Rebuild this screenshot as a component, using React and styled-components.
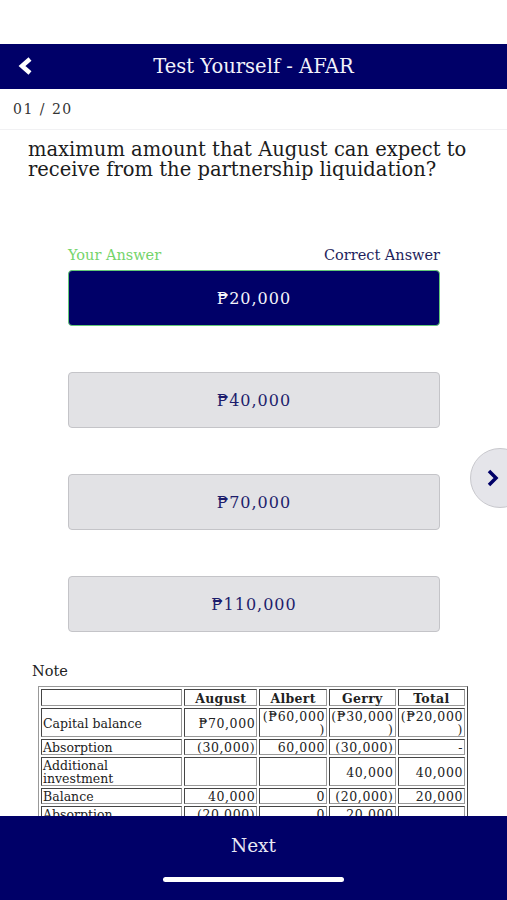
import styled, { createGlobalStyle } from "styled-components";

const NAVY = "#000068";
const FONT = `"DejaVu Serif", "Liberation Serif", Georgia, serif`;

const GlobalStyle = createGlobalStyle`
  html, body {
    margin: 0;
    padding: 0;
    background: #fff;
    font-family: ${FONT};
  }
  * { box-sizing: border-box; }
`;

const Screen = styled.div`
  height: 100vh;
  display: flex;
  flex-direction: column;
  overflow: hidden;
  background: #fff;
`;

const StatusSpace = styled.div`
  height: 44px;
  flex-shrink: 0;
`;

const Header = styled.header`
  height: 45px;
  flex-shrink: 0;
  background: ${NAVY};
  display: flex;
  align-items: center;
  position: relative;
  justify-content: center;
  color: #f2f2fa;
  font-size: 19.5px;
`;

const BackButton = styled.button`
  position: absolute;
  left: 14px;
  top: 10px;
  background: none;
  border: none;
  padding: 0;
  width: 24px;
  height: 24px;
  display: flex;
  align-items: center;
  justify-content: center;
`;

const Counter = styled.div`
  height: 41px;
  flex-shrink: 0;
  display: flex;
  align-items: center;
  padding-left: 13px;
  font-size: 14px;
  color: #333;
  letter-spacing: 1.5px;
  border-bottom: 1px solid #f1f1f3;
`;

const Body = styled.main`
  flex: 1;
  overflow: hidden;
  position: relative;
`;

const Question = styled.p`
  margin: 10px 0 0 28px;
  width: 460px;
  font-size: 19.5px;
  line-height: 20px;
  color: #1b1b1b;
`;

const Options = styled.section`
  margin: 66px 0 0 68px;
  width: 372px;
  display: flex;
  flex-direction: column;
  gap: 46px;
`;

const Labels = styled.div`
  display: flex;
  justify-content: space-between;
  font-size: 14.5px;
  margin-top: 1px;
  margin-bottom: -39px;
`;

const Label = styled.span`
  color: ${(p) => p.$color};
`;

const Option = styled.button`
  height: 56px;
  width: 100%;
  border-radius: 4px;
  font-family: ${FONT};
  font-size: 16px;
  letter-spacing: 1px;
  background: ${(p) => (p.$selected ? NAVY : "#e2e2e5")};
  color: ${(p) => (p.$selected ? "#f4f4fb" : "#1d1d6c")};
  border: 1px solid ${(p) => (p.$selected ? "#63c877" : "#c4c4c8")};
`;

const SideButton = styled.button`
  position: absolute;
  left: 470px;
  top: 318px;
  width: 60px;
  height: 60px;
  border-radius: 50%;
  background: #e5e5ea;
  border: 1px solid #c8c8cd;
  padding: 0 0 0 15px;
  display: flex;
  align-items: center;
`;

const NoteTitle = styled.div`
  margin: 31px 0 0 32px;
  font-size: 14.5px;
  color: #222;
`;

const Table = styled.table`
  margin: 7px 0 0 38px;
  width: 430px;
  border: 1px outset #999;
  border-spacing: 2px;
  font-size: 12.5px;
  color: #222;
  table-layout: fixed;
  line-height: 13px;
`;

const Col = styled.col`
  width: ${(p) => p.$w};
`;

const Cell = styled.td`
  border: 1px inset #999;
  padding: 1px 1px 0;
  text-align: ${(p) => (p.$left ? "left" : "right")};
  letter-spacing: ${(p) => (p.$left ? "0" : "0.6px")};
  vertical-align: middle;
  overflow-wrap: anywhere;
`;

const HeadCell = styled.th`
  border: 1px inset #999;
  padding: 2px 1px 0;
  font-weight: bold;
  text-align: center;
  letter-spacing: 0.3px;
`;

const Footer = styled.footer`
  height: 84px;
  flex-shrink: 0;
  background: ${NAVY};
  display: flex;
  flex-direction: column;
  align-items: center;
  color: #e8e8f4;
  font-size: 18.5px;
  padding-top: 19px;
`;

const HomeBar = styled.div`
  width: 181px;
  height: 5px;
  border-radius: 3px;
  background: #fff;
  margin-top: 21px;
`;

const rows = [
  ["Capital balance", "₱70,000", "(₱60,000)", "(₱30,000)", "(₱20,000)"],
  ["Absorption", "(30,000)", "60,000", "(30,000)", "-"],
  ["Additional investment", "", "", "40,000", "40,000"],
  ["Balance", "40,000", "0", "(20,000)", "20,000"],
  ["Absorption", "(20,000)", "0", "20,000", ""],
];

const answers = ["₱20,000", "₱40,000", "₱70,000", "₱110,000"];

const App = () => {
  return (
    <Screen>
      <GlobalStyle />
      <StatusSpace />
      <Header>
        <BackButton aria-label="Back">
          <svg width="18" height="20" viewBox="0 0 18 20">
            <path d="M13 3 L5 10 L13 17" fill="none" stroke="#fff" strokeWidth="4.5" strokeLinejoin="miter" />
          </svg>
        </BackButton>
        Test Yourself - AFAR
      </Header>
      <Counter>01 / 20</Counter>
      <Body>
        <Question>
          maximum amount that August can expect to receive from the partnership liquidation?
        </Question>
        <Options>
          <Labels>
            <Label $color="#74d46a">Your Answer</Label>
            <Label $color="#1e1e5c">Correct Answer</Label>
          </Labels>
          {answers.map((a, i) => (
            <Option key={a} $selected={i === 0}>
              {a}
            </Option>
          ))}
        </Options>
        <SideButton aria-label="Next question">
          <svg width="14" height="20" viewBox="0 0 14 20">
            <path d="M3 3 L10 10 L3 17" fill="none" stroke={NAVY} strokeWidth="3.5" />
          </svg>
        </SideButton>
        <NoteTitle>Note</NoteTitle>
        <Table>
          <colgroup>
            <Col $w="34%" />
            <Col $w="17.5%" />
            <Col $w="16.3%" />
            <Col $w="16%" />
            <Col $w="16.2%" />
          </colgroup>
          <thead>
            <tr>
              <HeadCell />
              <HeadCell>August</HeadCell>
              <HeadCell>Albert</HeadCell>
              <HeadCell>Gerry</HeadCell>
              <HeadCell>Total</HeadCell>
            </tr>
          </thead>
          <tbody>
            {rows.map((r, i) => (
              <tr key={i}>
                <Cell $left>{r[0]}</Cell>
                {r.slice(1).map((v, j) => (
                  <Cell key={j}>{v}</Cell>
                ))}
              </tr>
            ))}
          </tbody>
        </Table>
      </Body>
      <Footer>
        Next
        <HomeBar />
      </Footer>
    </Screen>
  );
};

export default App;
